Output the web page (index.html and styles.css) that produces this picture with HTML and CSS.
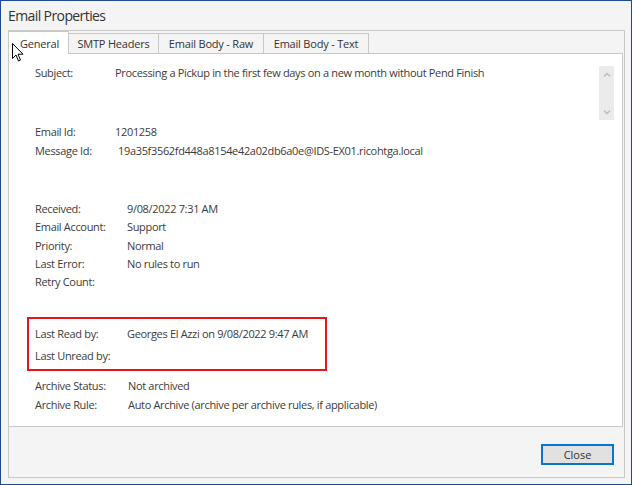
FILE: index.html
```html
<!DOCTYPE html>
<html lang="en">
<head>
  <meta charset="UTF-8" />
  <title>Email Properties</title>
  <link rel="stylesheet" href="styles.css">
</head>
<body>
  <div class="window">
    <div class="title">Email Properties</div>
    <div class="frame">
      <div class="tabs">
        <div class="tab active">General</div>
        <div class="tab">SMTP Headers</div>
        <div class="tab">Email Body - Raw</div>
        <div class="tab">Email Body - Text</div>
        <div class="tab-rest"></div>
      </div>
      <div class="pane">
        <div class="subject">
          <div class="label">Subject:</div>
          <div class="subject-box">
            <div class="subject-text">Processing a Pickup in the first few days on a new month without Pend Finish</div>
            <div class="scroll">
              <svg width="8" height="5" viewBox="0 0 8 5"><path d="M1 4.5 L4 1.5 L7 4.5" fill="none" stroke="#bdbdbd" stroke-width="1.4"/></svg>
              <svg width="8" height="5" viewBox="0 0 8 5"><path d="M1 0.5 L4 3.5 L7 0.5" fill="none" stroke="#bdbdbd" stroke-width="1.4"/></svg>
            </div>
          </div>
        </div>

        <div class="group ids">
          <div class="label">Email Id:</div><div class="value">1201258</div>
          <div class="label">Message Id:</div><div class="value msgid">19a35f3562fd448a8154e42a02db6a0e@IDS-EX01.ricohtga.local</div>
        </div>

        <div class="group status">
          <div class="label">Received:</div><div class="value">9/08/2022 7:31 AM</div>
          <div class="label">Email Account:</div><div class="value">Support</div>
          <div class="label">Priority:</div><div class="value">Normal</div>
          <div class="label">Last Error:</div><div class="value">No rules to run</div>
          <div class="label">Retry Count:</div><div class="value"></div>
        </div>

        <div class="group reads">
          <div class="label">Last Read by:</div><div class="value">Georges El Azzi on 9/08/2022 9:47 AM</div>
          <div class="label">Last Unread by:</div><div class="value"></div>
        </div>

        <div class="group archive">
          <div class="label">Archive Status:</div><div class="value">Not archived</div>
          <div class="label">Archive Rule:</div><div class="value">Auto Archive (archive per archive rules, if applicable)</div>
        </div>
      </div>
      <div class="footer">
        <button class="close-btn">Close</button>
      </div>
    </div>

    <svg class="cursor" width="12" height="19" viewBox="0 0 12 19">
      <path d="M0.5 0.5 L0.5 15.5 L4 12 L6.5 18 L8.5 17 L6 11.2 L11 11.2 Z" fill="#fff" stroke="#000" stroke-width="1" stroke-linejoin="miter"/>
    </svg>
  </div>
</body>
</html>
```

FILE: styles.css
```css
html, body {
  margin: 0;
  padding: 0;
  background: #f4f4f4;
  font-family: "Open Sans", "Noto Sans", sans-serif;
  color: #3b3b3b;
}

.window {
  position: relative;
  width: 632px;
  height: 485px;
  box-sizing: border-box;
  border: 1px solid #1e4b8f;
  background: #f4f4f4;
  display: flex;
  flex-direction: column;
}

.title {
  height: 29px;
  padding-left: 7px;
  font-size: 14px;
  line-height: 29px;
  letter-spacing: -0.6px;
  color: #333;
}

.frame {
  flex: 1;
  margin: 0 6px 6px 7px;
  border: 1px solid #c8c8c8;
  display: flex;
  flex-direction: column;
}

.tabs {
  display: flex;
  height: 22px;
  font-size: 11px;
  letter-spacing: -0.2px;
}

.tab {
  box-sizing: border-box;
  height: 21px;
  margin-top: 2px;
  padding: 0 10px;
  border: 1px solid #c8c8c8;
  border-bottom: none;
  border-left: none;
  background: #f4f4f4;
  line-height: 20px;
  color: #333;
  white-space: nowrap;
}

.tab.active {
  height: 23px;
  margin-top: 0;
  width: 60px;
  padding: 0 0 0 11px;
  background: #fff;
  line-height: 24px;
  position: relative;
  z-index: 1;
}

.tab:nth-child(2) { width: 90px; text-align: center; padding: 0; }
.tab:nth-child(3) { width: 105px; text-align: center; padding: 0; }
.tab:nth-child(4) { width: 105px; text-align: center; padding: 0; }

.tab-rest {
  flex: 1;
}

.pane {
  height: 374px;
  box-sizing: border-box;
  margin-right: 1px;
  background: #fff;
  border-top: 1px solid #c8c8c8;
  border-right: 1px solid #c8c8c8;
  border-bottom: 1px solid #c8c8c8;
  padding: 10px 8px 0 26px;
  font-size: 11px;
  letter-spacing: -0.33px;
}

.label, .value {
  line-height: 18px;
  white-space: nowrap;
}

.subject {
  display: grid;
  grid-template-columns: 80px 1fr;
}

.subject-box {
  display: flex;
  height: 58px;
}

.subject-text {
  flex: 1;
  line-height: 18px;
}

.scroll {
  width: 15px;
  height: 54px;
  margin-top: 2px;
  background: #ebebeb;
  display: flex;
  flex-direction: column;
  justify-content: space-between;
  align-items: center;
  padding: 6px 0 5px;
  box-sizing: border-box;
}

.scroll svg {
  display: block;
}

.group {
  display: grid;
  grid-template-columns: 92px 1fr;
}

.ids {
  grid-template-columns: 80px 1fr;
  margin-top: 1px;
  row-gap: 1px;
}

.msgid {
  padding-left: 3px;
}

.status {
  margin-top: 40px;
}

.status .label, .status .value {
  line-height: 18.3px;
}

.reads {
  box-sizing: border-box;
  margin: 26px 0 0 -8px;
  width: 300px;
  border: 2px solid #e8141c;
  padding: 6px 0 4px 6px;
  row-gap: 4px;
}

.archive {
  grid-template-columns: 93px 1fr;
  margin-top: 6px;
  row-gap: 1px;
}

.footer {
  flex: 1;
  display: flex;
  justify-content: flex-end;
  align-items: flex-start;
  padding: 17px 10px 0 0;
}

.close-btn {
  width: 73px;
  height: 21px;
  box-sizing: border-box;
  border: 2px solid #0a74d4;
  background: #e1e1e1;
  font-family: "Open Sans", "Noto Sans", sans-serif;
  font-size: 11px;
  color: #333;
  padding: 0;
}

.cursor {
  position: absolute;
  left: 11px;
  top: 42px;
  z-index: 5;
}
```
